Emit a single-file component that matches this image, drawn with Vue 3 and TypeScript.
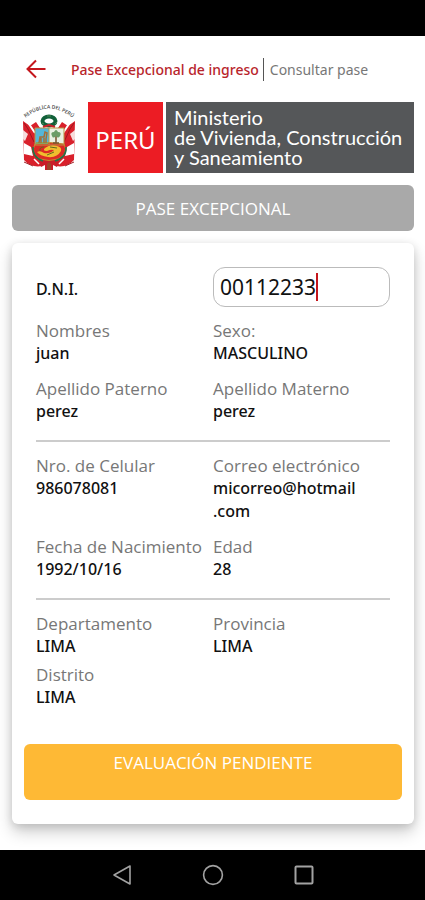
<script setup lang="ts">
import { ref } from 'vue'

interface Field {
  label: string
  value: string
}

interface Section {
  id: string
  compact?: boolean
  fields: Field[]
}

const dni = ref('00112233')

// A zero-width space marks where a long address may wrap.
const breakable = (text: string): string => text.replace(/\./g, '\u200b.')

const sections: Section[] = [
  {
    id: 'persona',
    fields: [
      { label: 'Nombres', value: 'juan' },
      { label: 'Sexo:', value: 'MASCULINO' },
      { label: 'Apellido Paterno', value: 'perez' },
      { label: 'Apellido Materno', value: 'perez' },
    ],
  },
  {
    id: 'contacto',
    fields: [
      { label: 'Nro. de Celular', value: '986078081' },
      { label: 'Correo electrónico', value: breakable('micorreo@hotmail.com') },
      { label: 'Fecha de Nacimiento', value: '1992/10/16' },
      { label: 'Edad', value: '28' },
    ],
  },
  {
    id: 'ubicacion',
    compact: true,
    fields: [
      { label: 'Departamento', value: 'LIMA' },
      { label: 'Provincia', value: 'LIMA' },
      { label: 'Distrito', value: 'LIMA' },
    ],
  },
]
</script>

<template>
  <div class="screen">
    <div class="status-bar"></div>

    <header class="top-bar">
      <button class="back" type="button" aria-label="Volver">
        <svg width="20" height="20" viewBox="0 0 20 20" fill="none" stroke="#c4161c" stroke-width="2">
          <path d="M19.500 10H1.500M10 1.500L1.500 10L10 18.500" />
        </svg>
      </button>
      <h1 class="title">Pase Excepcional de ingreso</h1>
      <span class="subtitle">Consultar pase</span>
    </header>

    <main class="content">
      <div class="brand">
        <svg class="arms" viewBox="0 0 54 70" width="54" height="70" aria-hidden="true">
          <defs>
            <path id="arc" d="M1 18Q27 -5 53 18" />
          </defs>
          <text class="arms-text"><textPath href="#arc" startOffset="50%" text-anchor="middle">REPÚBLICA DEL PERÚ</textPath></text>
          <!-- flags on both sides of the shield -->
          <path d="M1 19L8 24L14 20L20 29L17 50L20 64Q9 66 2 58Z" fill="#d9202b" />
          <path d="M53 19L46 24L40 20L34 29L37 50L34 64Q45 66 52 58Z" fill="#d9202b" />
          <path d="M1 28L6 32L3 39L1 37ZM53 28L48 32L51 39L53 37Z" fill="#f6dcdc" />
          <path d="M2 41L9 45L11 54L2 52ZM52 41L45 45L43 54L52 52Z" fill="#fff" />
          <path d="M7 22L13 31M47 22L41 31" stroke="#fff" stroke-width="2" />
          <path d="M2 21L6 27L12 40M52 21L48 27L42 40" stroke="#9c1820" stroke-width="1" fill="none" />
          <path d="M2 60L11 64M52 60L43 64" stroke="#a1242b" stroke-width="1" />
          <path d="M12 57L17 62M42 57L37 62" stroke="#fff" stroke-width="1.500" />
          <!-- ribbon below the shield -->
          <path d="M17 57H37L35 65L31 63V68H23V63L19 65Z" fill="#c91d29" />
          <path d="M25 62L27 60L29 62V68H25Z" fill="#9b452b" />
          <!-- wreath -->
          <ellipse cx="27" cy="19" rx="6.500" ry="4.500" fill="#fff" stroke="#12613a" stroke-width="4" />
          <path d="M20 21L22 22M33 22L35 20M25 14H29" stroke="#4f8b55" stroke-width="1" />
          <path d="M21 25L27 23L33 25" stroke="#cf202b" stroke-width="2" fill="none" />
          <!-- shield quarters -->
          <path d="M13 26H27V43H13Z" fill="#55b6d8" />
          <path d="M27 26H42V43H27Z" fill="#eaf1e2" />
          <path d="M13 42Q27 39 42 42Q47 52 36 57Q27 60 18 57Q8 52 13 42Z" fill="#dc2a25" stroke="#c08c2c" stroke-width="1" />
          <path d="M14 40H26V42H14Z" fill="#88a45b" />
          <path d="M17 41L18 35H22L23 30L25 31L24 37V41M19 36V41M22 36V41" fill="none" stroke="#a56e35" stroke-width="1.500" />
          <path d="M34 34V41M31 41H37" stroke="#76532b" stroke-width="1.500" />
          <path d="M30 34Q28 30 32 30Q34 26 36 30Q40 30 38 34Q36 37 34 34Q31 37 30 34Z" fill="#6c9d66" />
          <path d="M15 50Q18 54 26 55Q35 56 39 49Q40 45 35 44Q28 42 23 46Q20 49 25 49Q29 47 32 48Q28 52 22 51Q18 48 15 50Z" fill="#f1bd2e" />
          <path d="M18 49Q17 45 22 45M25 53L32 50M28 45L35 46" stroke="#5f6a1f" stroke-width="1" fill="none" />
          <path d="M13 26H42V43H13ZM27 26V43" fill="none" stroke="#b99544" stroke-width="1" />
          <path d="M11 45Q10 55 21 59M44 45Q45 55 33 59" stroke="#247246" stroke-width="1.500" fill="none" />
        </svg>
        <div class="country">PERÚ</div>
        <div class="ministry">Ministerio<br />de Vivienda, Construcción<br />y Saneamiento</div>
      </div>

      <button class="pass-button" type="button">PASE EXCEPCIONAL</button>

      <section class="card">
        <form class="form" @submit.prevent>
          <div class="dni-row">
            <label class="dni-label" for="dni">D.N.I.</label>
            <div class="dni-box">
              <input id="dni" v-model="dni" class="dni-input" type="text" inputmode="numeric" maxlength="8" size="8" />
              <span class="caret"></span>
            </div>
          </div>

          <dl v-for="section in sections" :key="section.id" class="fields" :class="{ compact: section.compact }">
            <div v-for="field in section.fields" :key="field.label" class="field">
              <dt>{{ field.label }}</dt>
              <dd>{{ field.value }}</dd>
            </div>
          </dl>
        </form>

        <button class="status" type="button">EVALUACIÓN PENDIENTE</button>
      </section>
    </main>

    <nav class="nav-bar">
      <button type="button" aria-label="Atrás">
        <svg width="22" height="22" viewBox="0 0 22 22" fill="none" stroke="#a2a2a2" stroke-width="1.600" stroke-linejoin="round">
          <path d="M19 2V20L3 11Z" />
        </svg>
      </button>
      <button type="button" aria-label="Inicio">
        <svg width="22" height="22" viewBox="0 0 22 22" fill="none" stroke="#a2a2a2" stroke-width="1.600">
          <circle cx="11" cy="11" r="9.400" />
        </svg>
      </button>
      <button type="button" aria-label="Recientes">
        <svg width="22" height="22" viewBox="0 0 22 22" fill="none" stroke="#a2a2a2" stroke-width="2">
          <rect x="2.500" y="2.500" width="17" height="17" rx="1" />
        </svg>
      </button>
    </nav>
  </div>
</template>

<style>
body {
  margin: 0;
  background: #fff;
}
</style>

<style scoped>
.screen {
  display: flex;
  flex-direction: column;
  min-height: 100vh;
  background: #fff;
  color: #111;
  font-family: 'Noto Sans', 'Open Sans', sans-serif;
  font-size: 16px;
  line-height: 23px;
}

button {
  border: 0;
  padding: 0;
  font: inherit;
  background: none;
}

.status-bar {
  height: 36px;
  background: #000;
}

.top-bar {
  display: flex;
  align-items: center;
  height: 66px;
  padding-left: 26px;
  white-space: nowrap;
}

.back {
  display: flex;
  margin-right: 25px;
}

.title {
  margin: 0;
  font-size: 14px;
  font-weight: 500;
  color: #b8252b;
}

.subtitle {
  margin-left: 4px;
  padding-left: 6px;
  border-left: 1px solid #555;
  font-size: 14px;
  color: #777;
}

.content {
  flex: 1;
  display: flex;
  flex-direction: column;
  gap: 12px;
  padding: 0 11px 26px 12px;
}

.brand {
  display: flex;
  height: 71px;
  padding-left: 10px;
}

.arms {
  flex: none;
  margin-right: 12px;
}

.arms-text {
  font-size: 5px;
  font-weight: 500;
  fill: #333;
}

.country {
  display: flex;
  align-items: center;
  justify-content: center;
  box-sizing: border-box;
  width: 75px;
  margin-right: 3px;
  padding-top: 4px;
  background: #ec1c24;
  color: #fff;
  font-size: 24px;
}

.ministry {
  flex: 1;
  padding: 5px 0 0 8px;
  background: #555759;
  color: #fff;
  font-family: Lato, 'Open Sans', sans-serif;
  font-size: 20px;
  line-height: 20px;
  white-space: nowrap;
}

.pass-button,
.status {
  border-radius: 6px;
  color: #fff;
  font-family: 'Open Sans', sans-serif;
  font-size: 17px;
}

.pass-button {
  height: 46px;
  background: #a9a9a9;
}

.card {
  display: flex;
  flex-direction: column;
  gap: 35px;
  padding: 24px 12px;
  border-radius: 6px;
  background: #fff;
  box-shadow: 0 8px 16px rgba(0, 0, 0, 0.2), 0 2px 8px rgba(0, 0, 0, 0.12);
}

.form {
  padding: 0 12px;
}

.dni-row {
  display: grid;
  grid-template-columns: 1fr 1fr;
  align-items: center;
  margin-bottom: 12px;
}

.dni-label {
  padding-top: 4px;
  font-weight: 500;
}

.dni-box {
  display: flex;
  align-items: center;
  box-sizing: border-box;
  height: 40px;
  padding-left: 6px;
  border: 1px solid #bbb;
  border-radius: 12px;
}

.dni-input {
  field-sizing: content;
  min-width: 0;
  padding: 0;
  border: 0;
  outline: 0;
  background: none;
  color: #111;
  font: inherit;
  font-size: 21px;
  line-height: 28px;
}

.caret {
  width: 2px;
  height: 28px;
  background: #c4161c;
}

.fields {
  display: grid;
  grid-template-columns: 1fr 1fr;
  row-gap: 12px;
  margin: 0;
}

.fields.compact {
  row-gap: 5px;
}

.fields + .fields {
  margin-top: 17px;
  padding-top: 12px;
  border-top: 2px solid #ccc;
}

.field dt {
  font-family: 'Open Sans', sans-serif;
  font-size: 17px;
  color: #777;
  white-space: nowrap;
}

.field dd {
  margin: 0;
  padding-right: 24px;
  font-weight: 500;
  color: #111;
}

.status {
  height: 56px;
  padding-bottom: 20px;
  background: #feb935;
}

.nav-bar {
  display: flex;
  justify-content: center;
  align-items: center;
  gap: 69px;
  height: 50px;
  background: #000;
}

.nav-bar button {
  display: flex;
}
</style>
